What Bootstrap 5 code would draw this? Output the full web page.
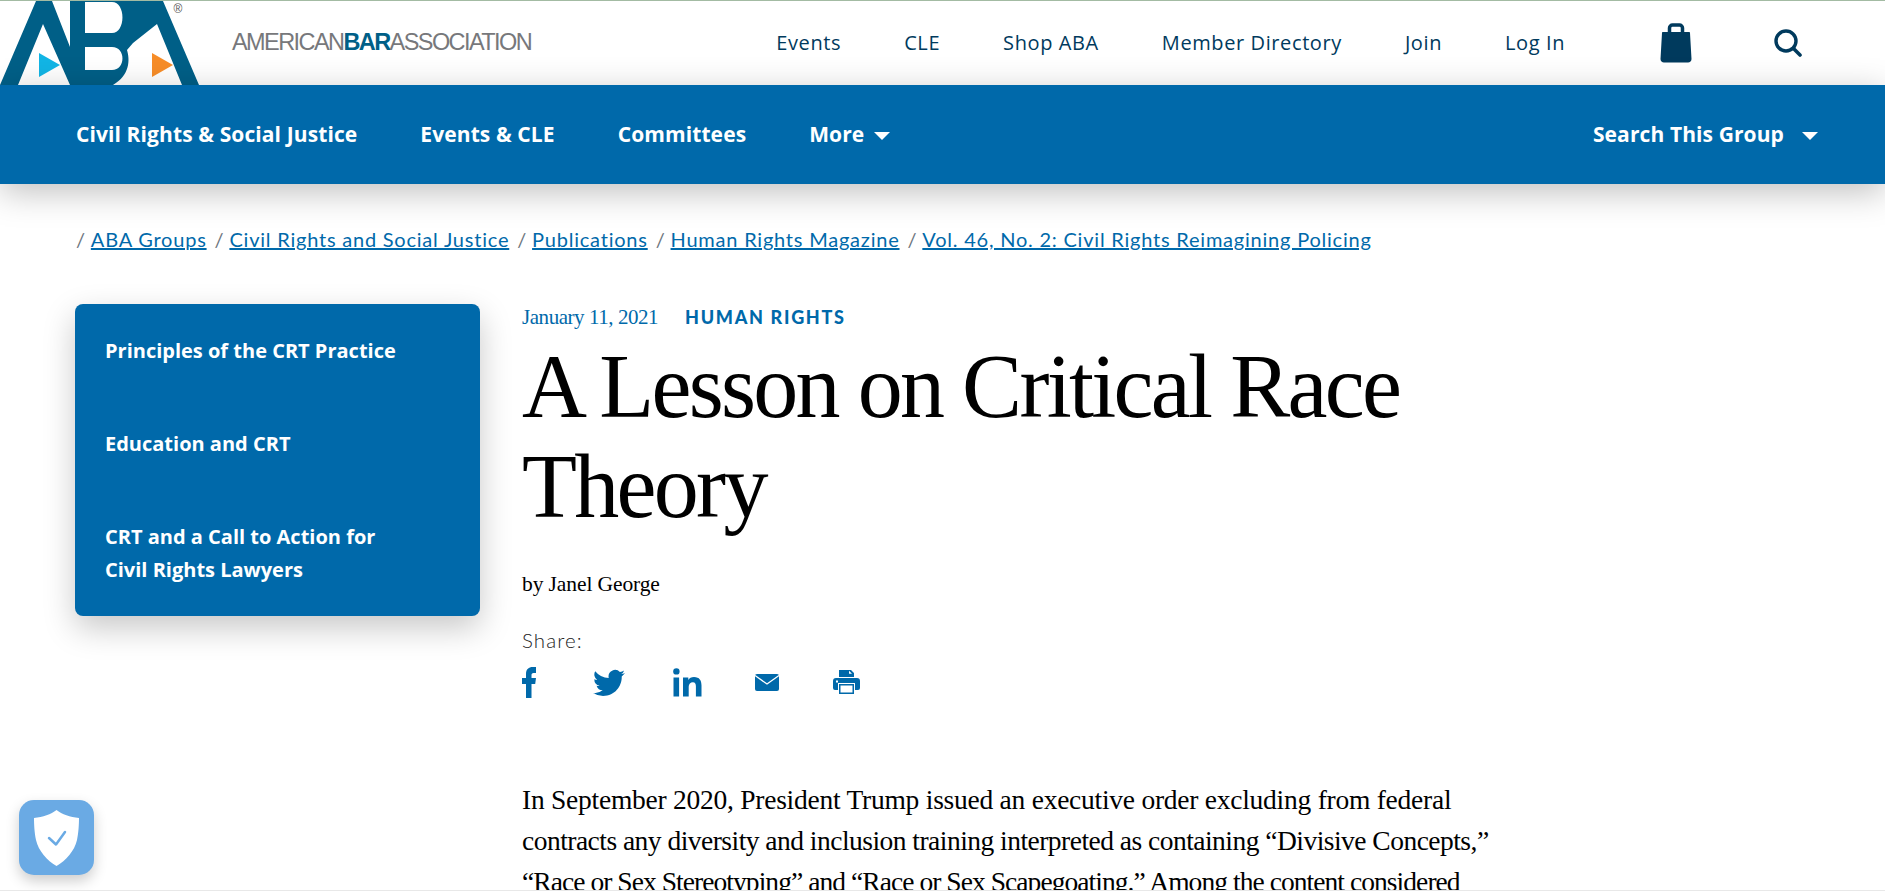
<!DOCTYPE html>
<html lang="en">
<head>
  <meta charset="UTF-8" />
  <meta name="viewport" content="width=device-width, initial-scale=1" />
  <title>A Lesson on Critical Race Theory</title>
  <link href="https://cdn.jsdelivr.net/npm/bootstrap@5.3.3/dist/css/bootstrap.min.css" rel="stylesheet" />
  <style>
    html, body { height: 100%; overflow: hidden; }
    body { font-family: "Lato", "Liberation Sans", sans-serif; color: #000; background: #fff; }
    a { color: #0069aa; }

    .top-strip { height: 85px; border-top: 1px solid #a3bba3; padding-right: 83px; }
    .aba-logo { display: block; width: 200px; height: 84px; }
    .wordmark { margin-left: 32px; font-family: "Liberation Sans", sans-serif; font-size: 23.5px; letter-spacing: -1.58px; color: #77787b; white-space: nowrap; }
    .wordmark b { color: #005f87; }
    .top-links { gap: 63px; }
    .top-links .nav-link { padding: 0; font-family: "Open Sans", sans-serif; font-size: 20px; font-weight: 500; letter-spacing: .6px; color: #003a5d; }
    .bag-icon { display: block; width: 32px; height: 40px; margin-left: 95px; }
    .find-icon { display: block; width: 28px; height: 28px; margin-left: 82px; }

    .blue-bar { height: 99px; padding: 0 67px 0 76px; background: #0069aa; box-shadow: 0 8px 32px rgba(0,0,0,.25); position: relative; }
    .blue-links { gap: 63px; }
    .blue-links .nav-link, .group-search { padding: 0; font-family: "Open Sans", sans-serif; font-size: 21px; font-weight: 700; letter-spacing: .1px; color: #fff; }
    .caret-down { display: inline-block; width: 0; height: 0; border-left: 8px solid transparent; border-right: 8px solid transparent; border-top: 8px solid #fff; vertical-align: middle; }
    .blue-links .caret-down { margin-left: 10px; }
    .group-search .caret-down { margin-left: 18px; }

    .crumbs { padding: 42px 76px 0; height: 120px; }
    .crumbs .breadcrumb { font-size: 20px; letter-spacing: .78px; line-height: 26px; }
    .crumbs .breadcrumb-item { padding-left: 8px; }
    .crumbs .breadcrumb-item:first-child { padding-left: 0; }
    .crumbs .breadcrumb-item::before { display: inline-block; float: none; padding-right: 5px; content: "/"; color: #6c757d; }
    .page-cols { padding-left: 75px; }

    .side-menu { width: 405px; flex: none; align-self: flex-start; padding: 30px; gap: 60px; background: #0069aa; border-radius: 8px; box-shadow: 0 12px 32px rgba(0,0,0,.22); }
    .side-menu a { display: block; font-family: "Open Sans", sans-serif; font-size: 20px; font-weight: 700; line-height: 33px; color: #fff; text-decoration: none; }

    .article-col { margin-left: 42px; width: 985px; }
    .serif-text { font-family: "Liberation Serif", serif; }
    .meta-line { height: 26px; font-size: 21px; line-height: 26px; color: #0069aa; letter-spacing: -.45px; }
    .meta-tag { margin-left: 27px; font-family: "Lato", sans-serif; font-size: 18px; font-weight: 900; letter-spacing: 1.7px; }
    .article-title { margin: 7px 0 0; font-family: "Liberation Serif", serif; font-size: 90px; line-height: 100px; font-weight: 400; letter-spacing: -2.7px; }
    .byline { margin-top: 34px; font-size: 21.5px; line-height: 26px; letter-spacing: -.1px; }
    .share-label { margin-top: 31px; font-size: 20.5px; line-height: 24px; font-weight: 300; letter-spacing: 1.1px; color: #222; }
    .share-row { height: 32px; margin-top: 14px; }
    .share-row svg { display: block; fill: #0069aa; }
    .lead-para { margin-top: 81px; font-family: "Liberation Serif", serif; font-size: 27.5px; line-height: 41px; white-space: nowrap; }
    .lead-para span { display: block; }
    .line-a { letter-spacing: -.25px; }
    .line-b { letter-spacing: -.52px; }
    .line-c { letter-spacing: -.94px; }

    .trust-badge { position: fixed; left: 19px; top: 800px; width: 75px; height: 75px; background: #6aaae4; border-radius: 15px; box-shadow: 0 6px 14px rgba(0,0,0,.2); }
    .fold-line { position: fixed; left: 0; right: 0; bottom: 0; height: 1px; background: #e8e8e8; }
  </style>
</head>
<body>

  <header class="top-strip d-flex align-items-center">
    <svg class="aba-logo" viewBox="0 1 200 84" aria-label="American Bar Association logo">
      <path fill="#005f87" fill-rule="evenodd" d="M0 85 36 1H163L199 85H182L157 24 133 43 127 50C130 60 130 75 113 85H70L43 24 18 85ZM52 1 70 47V1ZM85 2V33H112C126 33 126 2 112 2ZM85 47V70H112C126 70 126 47 112 47Z" />
      <polygon fill="#12b5e5" points="39,53 39,77 60,65" />
      <polygon fill="#f78d28" points="152,53 152,77 173,65" />
      <text x="178" y="13" font-size="12" text-anchor="middle" fill="#555" font-family="Liberation Sans, sans-serif">®</text>
    </svg>
    <div class="wordmark">AMERICAN<b>BAR</b>ASSOCIATION</div>
    <nav class="nav top-links ms-auto">
      <a class="nav-link" href="#">Events</a>
      <a class="nav-link" href="#">CLE</a>
      <a class="nav-link" href="#">Shop ABA</a>
      <a class="nav-link" href="#">Member Directory</a>
      <a class="nav-link" href="#">Join</a>
      <a class="nav-link" href="#">Log In</a>
    </nav>
    <svg class="bag-icon" viewBox="0 0 32 40" aria-label="Cart">
      <path fill="none" stroke="#003a5d" stroke-width="3.5" d="M9.5 10V5a3 3 0 0 1 3-3h7a3 3 0 0 1 3 3v5" />
      <path fill="#003a5d" d="M3 9h26c.6 0 1 .4 1 1l1.5 26c0 2-1.500 3.500-3.500 3.500H4C2 39.500.5 38 .5 36L2 10c0-.6.4-1 1-1z" />
    </svg>
    <svg class="find-icon" viewBox="0 0 28 28" aria-label="Search">
      <circle cx="12" cy="12" r="10" fill="none" stroke="#003a5d" stroke-width="3.400" />
      <path stroke="#003a5d" stroke-width="3.600" stroke-linecap="round" d="M19.500 19.500 26 26" />
    </svg>
  </header>

  <div class="blue-bar d-flex align-items-center justify-content-between">
    <nav class="nav blue-links">
      <a class="nav-link" href="#">Civil Rights &amp; Social Justice</a>
      <a class="nav-link" href="#">Events &amp; CLE</a>
      <a class="nav-link" href="#">Committees</a>
      <a class="nav-link" href="#">More<span class="caret-down"></span></a>
    </nav>
    <div class="group-search">Search This Group<span class="caret-down"></span></div>
  </div>

  <div class="crumbs">
    <ol class="breadcrumb mb-0">
      <li class="breadcrumb-item"><a href="#">ABA Groups</a></li>
      <li class="breadcrumb-item"><a href="#">Civil Rights and Social Justice</a></li>
      <li class="breadcrumb-item"><a href="#">Publications</a></li>
      <li class="breadcrumb-item"><a href="#">Human Rights Magazine</a></li>
      <li class="breadcrumb-item"><a href="#">Vol. 46, No. 2: Civil Rights Reimagining Policing</a></li>
    </ol>
  </div>

  <div class="page-cols d-flex">
    <aside class="side-menu d-flex flex-column">
      <a href="#">Principles of the CRT Practice</a>
      <a href="#">Education and CRT</a>
      <a href="#">CRT and a Call to Action for<br />Civil Rights Lawyers</a>
    </aside>

    <main class="article-col">
      <div class="meta-line serif-text">January 11, 2021<span class="meta-tag">HUMAN RIGHTS</span></div>
      <h1 class="article-title">A Lesson on Critical Race Theory</h1>
      <div class="byline serif-text">by Janel George</div>
      <div class="share-label">Share:</div>
      <div class="share-row d-flex align-items-center">
        <svg width="14" height="31" viewBox="0 0 14 31"><path d="M4 31V17H0v-6h4V7c0-5 3-7 6.500-7H14v6h-2.500C10 6 9.500 7 9.500 8v3H14l-.8 6H9.500v14z" /></svg>
        <svg style="margin-left:57px" width="32" height="32" viewBox="0 0 16 16"><path d="M5.026 15c6.038 0 9.341-5.003 9.341-9.334 0-.14 0-.282-.006-.422A6.685 6.685 0 0 0 16 3.542a6.658 6.658 0 0 1-1.889.518 3.301 3.301 0 0 0 1.447-1.817 6.533 6.533 0 0 1-2.087.793A3.286 3.286 0 0 0 7.875 6.030a9.325 9.325 0 0 1-6.767-3.429 3.289 3.289 0 0 0 1.018 4.382A3.323 3.323 0 0 1 .64 6.575v.045a3.288 3.288 0 0 0 2.632 3.218 3.203 3.203 0 0 1-.865.115 3.230 3.230 0 0 1-.614-.057 3.283 3.283 0 0 0 3.067 2.277A6.588 6.588 0 0 1 .78 13.580a6.320 6.320 0 0 1-.78-.045A9.344 9.344 0 0 0 5.026 15z" /></svg>
        <svg style="margin-left:48px" width="29" height="29" viewBox="0 0 29 29"><circle cx="3.400" cy="3.400" r="3.200" /><rect x=".5" y="9.500" width="5.600" height="19" /><path d="M10 9.500h5.300V12c1-1.700 3-3 5.700-3 5.500 0 7.500 3.500 7.500 8.500v11h-5.600v-10c0-2.500-.7-4.300-3-4.300-2.500 0-4.200 1.800-4.200 4.500v9.800H10z" /></svg>
        <svg style="margin-left:53px" width="24" height="17" viewBox="0 0 24 17"><rect width="24" height="17" rx="2" /><path fill="none" stroke="#fff" stroke-width="1.300" d="M0 1.500 12 10 24 1.500" /></svg>
        <svg style="margin-left:54px" width="27" height="24" viewBox="0 0 27 24"><path d="M6 0h12l3 3v4H6zM3 8h21a3 3 0 0 1 3 3v7a2 2 0 0 1-2 2h-3v-7H5v7H2a2 2 0 0 1-2-2v-7a3 3 0 0 1 3-3z" /><path fill="#fff" d="M16 .8v3h3zM3 10.500h2v2H3z" /><path d="M6 14h15v10H6zM7.500 15.500V22.500h12v-7z" fill-rule="evenodd" /></svg>
      </div>
      <p class="lead-para">
        <span class="line-a">In September 2020, President Trump issued an executive order excluding from federal</span>
        <span class="line-b">contracts any diversity and inclusion training interpreted as containing “Divisive Concepts,”</span>
        <span class="line-c">“Race or Sex Stereotyping” and “Race or Sex Scapegoating.” Among the content considered</span>
      </p>
    </main>
  </div>

  <div class="trust-badge d-flex align-items-center justify-content-center">
    <svg width="45" height="56" viewBox="0 0 45 56" aria-label="Privacy">
      <path fill="#fff" d="M22.500 0C17 4.500 9 7 0 8c0 6 .5 15 2 22 2.500 11 11 20.500 20.500 26C32 50.500 40.500 41 43 30c1.500-7 2-16 2-22C36 7 28 4.500 22.500 0z" />
      <path fill="none" stroke="#6aaae4" stroke-width="2.500" stroke-linecap="round" stroke-linejoin="round" d="M15 28l7 6.500L31 22" />
    </svg>
  </div>
  <div class="fold-line"></div>

  <script src="https://cdn.jsdelivr.net/npm/bootstrap@5.3.3/dist/js/bootstrap.bundle.min.js"></script>
</body>
</html>
